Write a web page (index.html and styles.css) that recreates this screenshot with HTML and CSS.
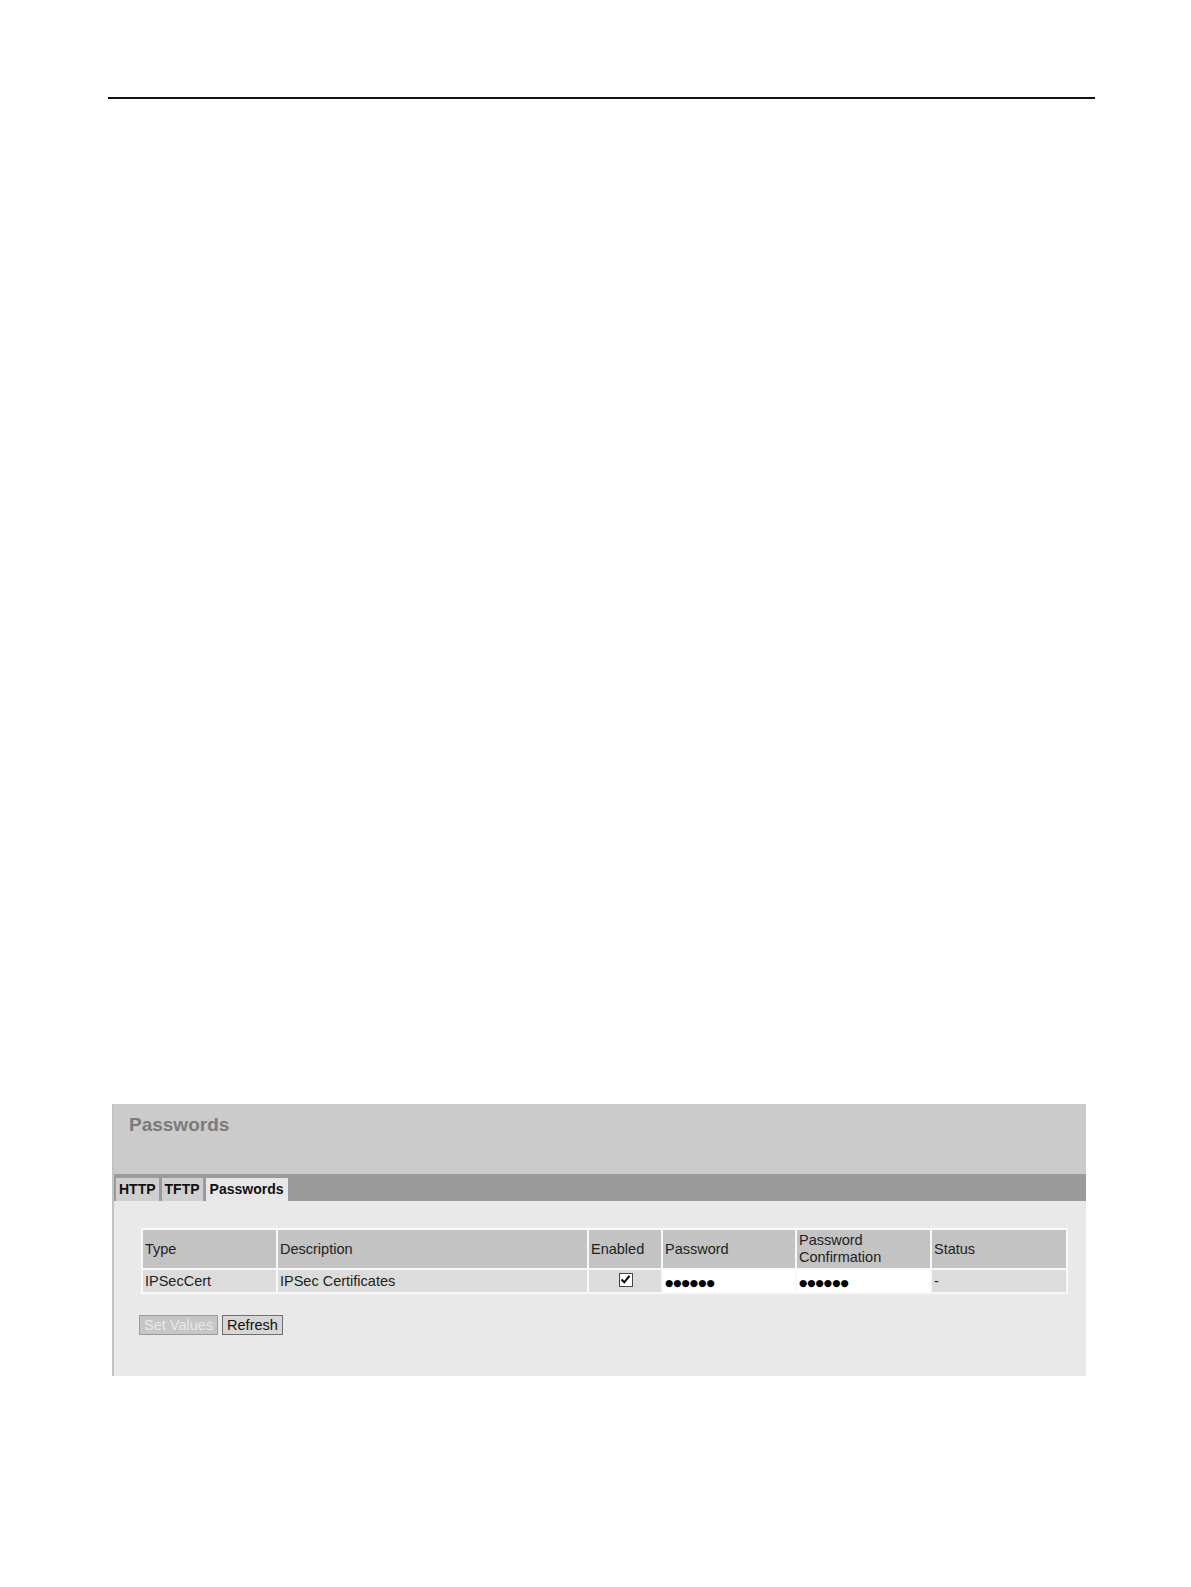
FILE: index.html
```html
<!DOCTYPE html>
<html>
<head>
<meta charset="utf-8">
<link rel="stylesheet" href="styles.css">
</head>
<body>
<div class="page">
  <div class="rule"></div>
  <div class="shot">
    <div class="head"><div class="title">Passwords</div></div>
    <div class="tabbar">
      <div class="tab">HTTP</div>
      <div class="tab">TFTP</div>
      <div class="tab active">Passwords</div>
    </div>
    <div class="content">
      <table class="grid">
        <colgroup>
          <col class="c1"><col class="c2"><col class="c3"><col class="c4"><col class="c5"><col class="c6">
        </colgroup>
        <thead>
          <tr><th>Type</th><th>Description</th><th>Enabled</th><th>Password</th><th>Password<br>Confirmation</th><th>Status</th></tr>
        </thead>
        <tbody>
          <tr>
            <td>IPSecCert</td>
            <td>IPSec Certificates</td>
            <td class="center"><span class="check"><svg width="11" height="11" viewBox="0 0 11 11"><path d="M1.5 5.5 L4.2 8.3 L9.5 1.8" fill="none" stroke="#000" stroke-width="2"/></svg></span></td>
            <td class="pw"><span class="dots">●●●●●●</span></td>
            <td class="pw"><span class="dots">●●●●●●</span></td>
            <td>-</td>
          </tr>
        </tbody>
      </table>
      <div class="buttons">
        <span class="btn disabled">Set Values</span>
        <span class="btn">Refresh</span>
      </div>
    </div>
  </div>
</div>
</body>
</html>
```
FILE: styles.css
```css
html, body { margin: 0; padding: 0; background: #fff; }
body { font-family: "Liberation Sans", Arial, sans-serif; }
.page { padding-top: 97px; }
.rule { margin-left: 108px; width: 987px; height: 2px; background: #111; }
.shot { margin: 1005px 0 0 112px; width: 972px; border-left: 2px solid #c2c2c2; }
.head { height: 70px; background: #cbcbcb; box-sizing: border-box; padding: 10px 0 0 15px; }
.title { font-size: 19px; font-weight: bold; color: #7b7b7b; line-height: 22px; }
.tabbar { height: 27px; background: #9b9b9b; display: flex; align-items: flex-end; gap: 3px; padding-left: 2px; }
.tab { height: 23px; line-height: 23px; background: #cfcfcf; font-size: 14px; font-weight: bold; color: #111; padding: 0 3px; }
.tab.active { background: #e7e7e7; padding: 0 4px; }
.content { height: 175px; background: #e9e9e9; box-sizing: border-box; padding: 27px 0 0 27px; }
.grid { border-collapse: separate; border-spacing: 2px; background: #f8f8f8; table-layout: fixed; width: 927px; font-size: 14.5px; color: #222; }
.c1 { width: 133px; } .c2 { width: 309px; } .c3 { width: 72px; } .c4 { width: 132px; } .c5 { width: 133px; } .c6 { width: 134px; }
.grid th { background: #c3c3c3; font-weight: normal; text-align: left; height: 38px; padding: 0 2px; line-height: 17px; vertical-align: middle; }
.grid td { background: #dcdcdc; height: 20px; padding: 0 2px; line-height: 20px; white-space: nowrap; }
.grid td.center { text-align: center; padding-left: 3px; }
.grid td.pw { background: #fff; }
.dots { font-size: 9.5px; font-family: "DejaVu Sans", sans-serif; color: #000; position: relative; top: 1px; }
.check { display: inline-block; width: 14px; height: 14px; border: 1px solid #444; background: #fff; box-sizing: border-box; vertical-align: middle; position: relative; top: -2px; line-height: 0; }
.buttons { margin-top: 21px; display: flex; gap: 4px; margin-left: -2px; }
.btn { display: inline-block; height: 20px; line-height: 18px; box-sizing: border-box; border: 1px solid #6f6f6f; background: #d6d6d6; font-size: 14.5px; color: #111; padding: 0 4px; }
.btn.disabled { background: #c6c6c6; color: #e8e8e8; border-color: #9a9a9a; }
```
